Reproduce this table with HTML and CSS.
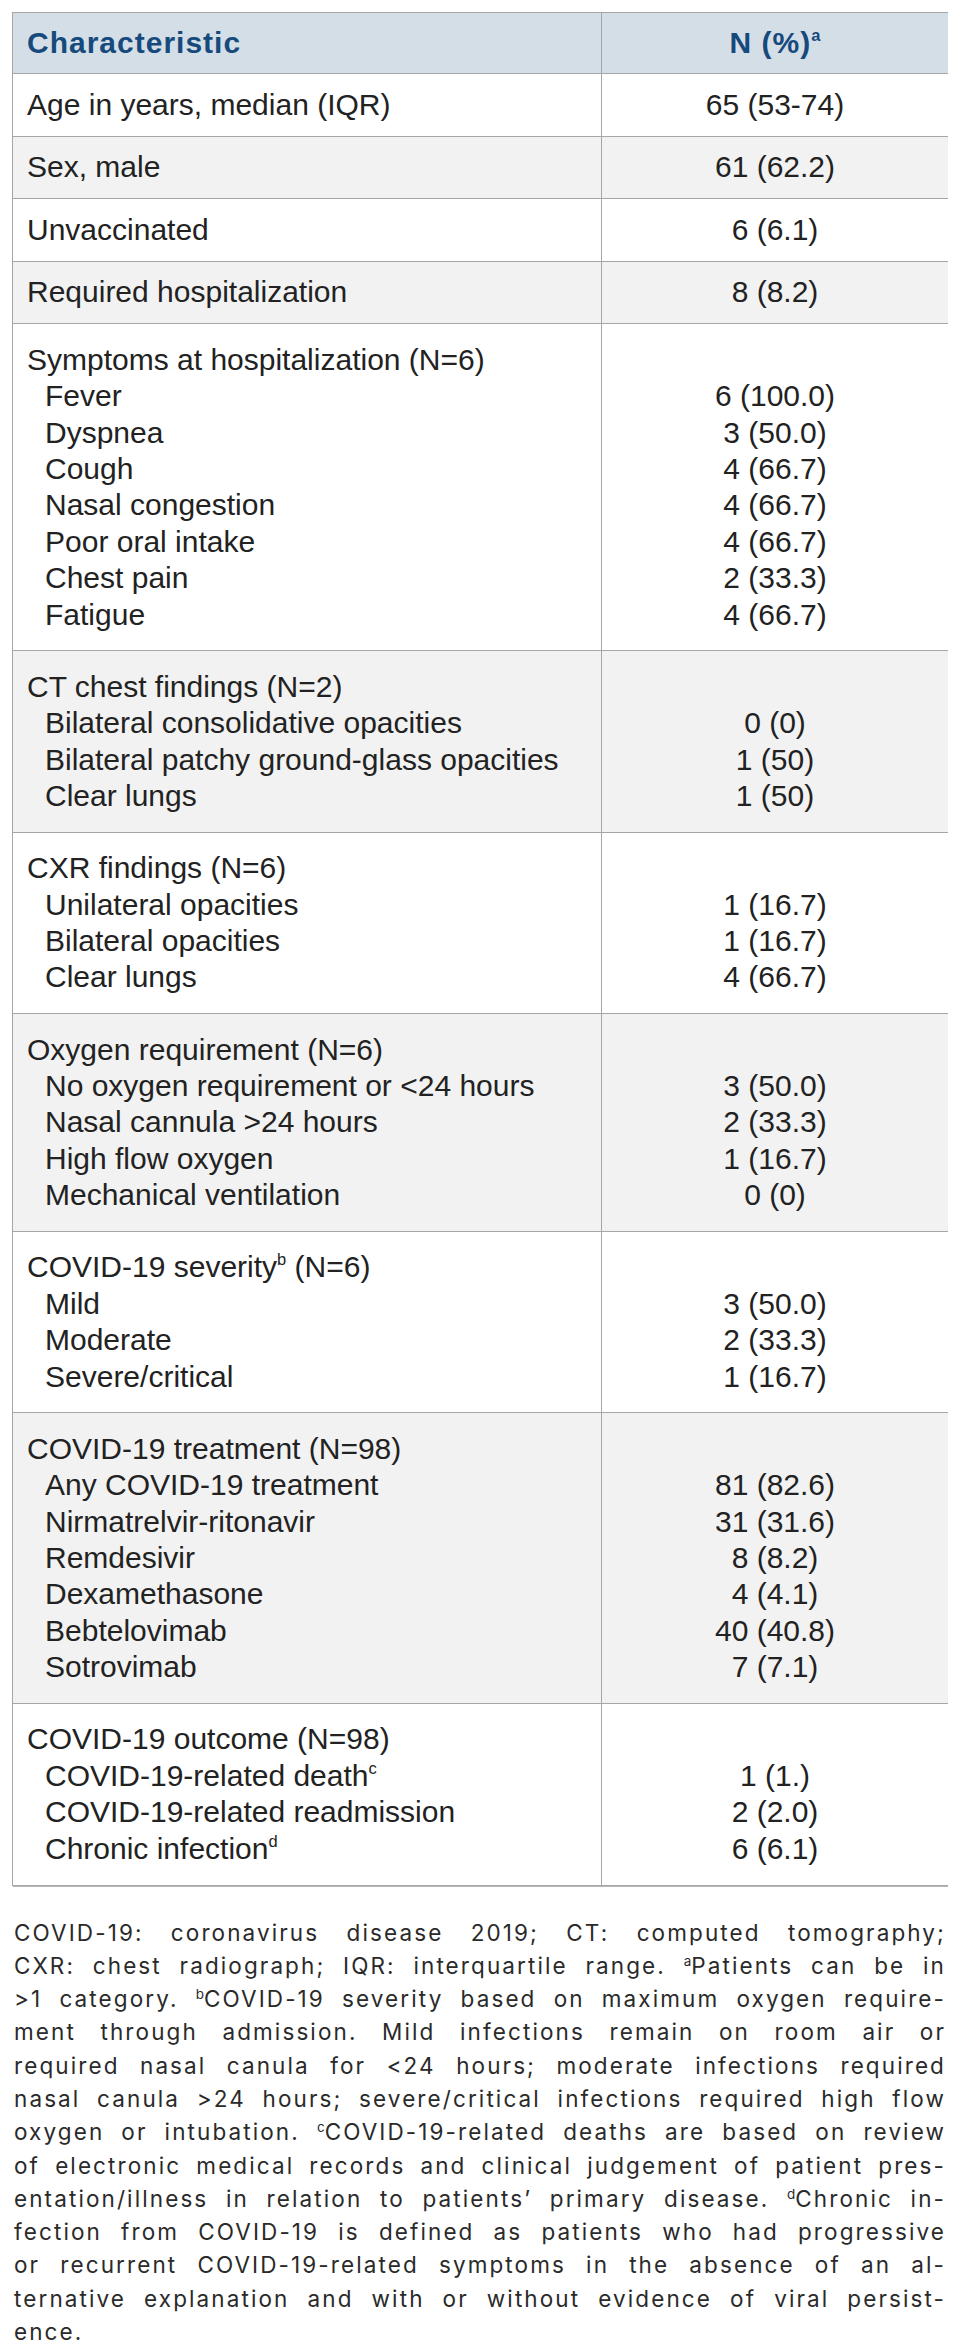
FILE: index.html
```html
<!DOCTYPE html>
<html lang="en">
<head>
<meta charset="utf-8">
<title>Table</title>
<link rel="stylesheet" href="styles.css">
</head>
<body>
<table class="tbl">
  <colgroup><col class="col-a"><col class="col-b"></colgroup>
  <thead>
    <tr><th>Characteristic</th><th class="num">N (%)<sup>a</sup></th></tr>
  </thead>
  <tbody>
    <tr><td>Age in years, median (IQR)</td><td class="num">65 (53-74)</td></tr>
    <tr class="alt"><td>Sex, male</td><td class="num">61 (62.2)</td></tr>
    <tr><td>Unvaccinated</td><td class="num">6 (6.1)</td></tr>
    <tr class="alt"><td>Required hospitalization</td><td class="num">8 (8.2)</td></tr>
    <tr class="grp">
      <td><div>Symptoms at hospitalization (N=6)</div><div class="sub">Fever</div><div class="sub">Dyspnea</div><div class="sub">Cough</div><div class="sub">Nasal congestion</div><div class="sub">Poor oral intake</div><div class="sub">Chest pain</div><div class="sub">Fatigue</div></td>
      <td class="num"><div class="blank"></div><div>6 (100.0)</div><div>3 (50.0)</div><div>4 (66.7)</div><div>4 (66.7)</div><div>4 (66.7)</div><div>2 (33.3)</div><div>4 (66.7)</div></td>
    </tr>
    <tr class="grp alt">
      <td><div>CT chest findings (N=2)</div><div class="sub">Bilateral consolidative opacities</div><div class="sub">Bilateral patchy ground-glass opacities</div><div class="sub">Clear lungs</div></td>
      <td class="num"><div class="blank"></div><div>0 (0)</div><div>1 (50)</div><div>1 (50)</div></td>
    </tr>
    <tr class="grp">
      <td><div>CXR findings (N=6)</div><div class="sub">Unilateral opacities</div><div class="sub">Bilateral opacities</div><div class="sub">Clear lungs</div></td>
      <td class="num"><div class="blank"></div><div>1 (16.7)</div><div>1 (16.7)</div><div>4 (66.7)</div></td>
    </tr>
    <tr class="grp alt">
      <td><div>Oxygen requirement (N=6)</div><div class="sub">No oxygen requirement or &lt;24 hours</div><div class="sub">Nasal cannula &gt;24 hours</div><div class="sub">High flow oxygen</div><div class="sub">Mechanical ventilation</div></td>
      <td class="num"><div class="blank"></div><div>3 (50.0)</div><div>2 (33.3)</div><div>1 (16.7)</div><div>0 (0)</div></td>
    </tr>
    <tr class="grp">
      <td><div>COVID-19 severity<sup>b</sup> (N=6)</div><div class="sub">Mild</div><div class="sub">Moderate</div><div class="sub">Severe/critical</div></td>
      <td class="num"><div class="blank"></div><div>3 (50.0)</div><div>2 (33.3)</div><div>1 (16.7)</div></td>
    </tr>
    <tr class="grp alt">
      <td><div>COVID-19 treatment (N=98)</div><div class="sub">Any COVID-19 treatment</div><div class="sub">Nirmatrelvir-ritonavir</div><div class="sub">Remdesivir</div><div class="sub">Dexamethasone</div><div class="sub">Bebtelovimab</div><div class="sub">Sotrovimab</div></td>
      <td class="num"><div class="blank"></div><div>81 (82.6)</div><div>31 (31.6)</div><div>8 (8.2)</div><div>4 (4.1)</div><div>40 (40.8)</div><div>7 (7.1)</div></td>
    </tr>
    <tr class="grp">
      <td><div>COVID-19 outcome (N=98)</div><div class="sub">COVID-19-related death<sup>c</sup></div><div class="sub">COVID-19-related readmission</div><div class="sub">Chronic infection<sup>d</sup></div></td>
      <td class="num"><div class="blank"></div><div>1 (1.)</div><div>2 (2.0)</div><div>6 (6.1)</div></td>
    </tr>
  </tbody>
</table>

<p class="note">
  <span class="ln">COVID-19: coronavirus disease 2019; CT: computed tomography;</span>
  <span class="ln">CXR: chest radiograph; IQR: interquartile range. <sup>a</sup>Patients can be in</span>
  <span class="ln">&gt;1 category. <sup>b</sup>COVID-19 severity based on maximum oxygen require-</span>
  <span class="ln">ment through admission. Mild infections remain on room air or</span>
  <span class="ln">required nasal canula for &lt;24 hours; moderate infections required</span>
  <span class="ln">nasal canula &gt;24 hours; severe/critical infections required high flow</span>
  <span class="ln">oxygen or intubation. <sup>c</sup>COVID-19-related deaths are based on review</span>
  <span class="ln">of electronic medical records and clinical judgement of patient pres-</span>
  <span class="ln">entation/illness in relation to patients’ primary disease. <sup>d</sup>Chronic in-</span>
  <span class="ln">fection from COVID-19 is defined as patients who had progressive</span>
  <span class="ln">or recurrent COVID-19-related symptoms in the absence of an al-</span>
  <span class="ln">ternative explanation and with or without evidence of viral persist-</span>
  <span class="ln last">ence.</span>
</p>
</body>
</html>
```

FILE: styles.css
```css
html, body {
  background: #ffffff;
}

body {
  margin: 12px;
  font-family: "Liberation Sans", Arial, sans-serif;
  color: #222222;
}

.tbl {
  width: 936px;
  table-layout: fixed;
  border-collapse: collapse;
  border: 1px solid #a6a6a6;
  box-shadow: 1px 1px 0 #b8b8b8;
  font-size: 30px;
  line-height: 36.4px;
}

.col-a {
  width: 589px;
}

.col-b {
  width: 347px;
}

.tbl th,
.tbl td {
  border: 1px solid #a6a6a6;
  padding: 12.55px 14px;
  vertical-align: top;
  text-align: left;
}

.tbl th {
  background: #d4dee7;
  color: #174a7c;
  font-weight: bold;
  letter-spacing: 1px;
  padding-top: 12px;
  padding-bottom: 12px;
}

.tbl .num {
  text-align: center;
}

.tbl tr.alt td {
  background: #f2f2f2;
}

.tbl tr.grp td {
  padding-top: 17.4px;
  padding-bottom: 17.4px;
}

.sub {
  padding-left: 18px;
}

.blank {
  height: 36.4px;
}

sup {
  font-size: 0.55em;
  line-height: 0;
  vertical-align: 0.75em;
}

.tbl th sup {
  letter-spacing: 0;
}

.note {
  margin: 30px 2px 0;
  font-family: Inter, Roboto, "Liberation Sans", sans-serif;
  font-size: 22.5px;
  line-height: 33.3px;
  color: #2a2a2a;
  letter-spacing: 2.1px;
}

.ln {
  display: block;
  text-align: justify;
  text-align-last: justify;
  text-justify: inter-character;
}

.ln.last {
  text-align-last: left;
}

.note sup {
  font-size: 0.6em;
  line-height: 0;
  vertical-align: baseline;
  position: relative;
  top: -0.6em;
  letter-spacing: 0;
}
```
